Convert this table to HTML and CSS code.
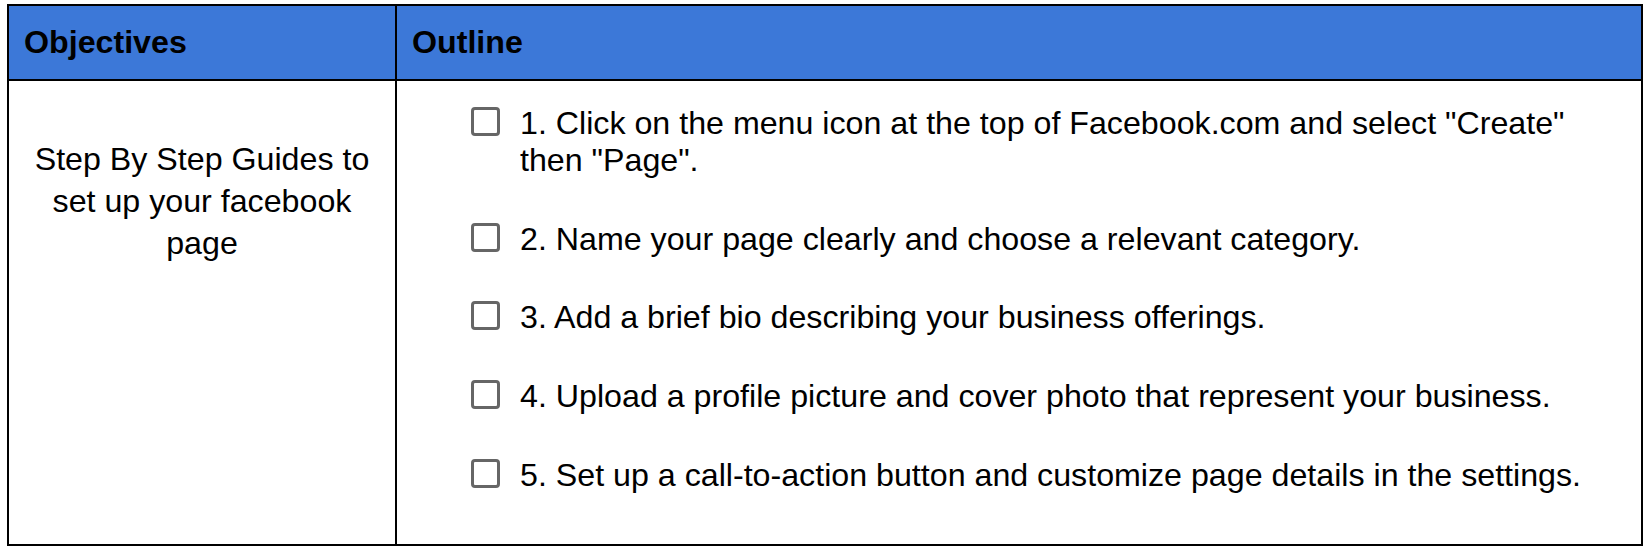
FILE: index.html
```html
<!DOCTYPE html>
<html lang="en">
<head>
  <meta charset="UTF-8">
  <title>Facebook Page Setup</title>
  <link rel="stylesheet" href="styles.css">
</head>
<body>
  <div class="table">
    <div class="head-cell left">Objectives</div>
    <div class="head-cell">Outline</div>

    <div class="body-cell left objective">
      Step By Step Guides to set up your facebook page
    </div>
    <div class="body-cell outline">
      <ul class="checklist">
        <li><span class="box"></span><span>1. Click on the menu icon at the top of Facebook.com and select "Create" then "Page".</span></li>
        <li><span class="box"></span><span>2. Name your page clearly and choose a relevant category.</span></li>
        <li><span class="box"></span><span>3. Add a brief bio describing your business offerings.</span></li>
        <li><span class="box"></span><span>4. Upload a profile picture and cover photo that represent your business.</span></li>
        <li><span class="box"></span><span>5. Set up a call-to-action button and customize page details in the settings.</span></li>
      </ul>
    </div>
  </div>
</body>
</html>
```

FILE: styles.css
```css
body { margin: 0; background: #fff; color: #000; font-family: "Liberation Sans", Arial, sans-serif; font-size: 32.2px; }
.table {
  display: grid;
  grid-template-columns: 388px 1fr;
  width: 1636px;
  box-sizing: border-box;
  margin: 4px 0 0 7px;
  border: 2px solid #000;
}
.head-cell {
  background: #3c78d8;
  font-weight: bold;
  height: 73px;
  line-height: 73px;
  padding-left: 15px;
  border-bottom: 2px solid #000;
}
.left { border-right: 2px solid #000; }
.objective {
  text-align: center;
  line-height: 42px;
  padding: 57px 16px 0;
}
.outline { padding: 24px 36px 8px 74px; }
.checklist { list-style: none; margin: 0; padding: 0; }
.checklist li {
  display: flex;
  align-items: flex-start;
  gap: 20px;
  line-height: 36.8px;
  margin-bottom: 42px;
}
.box {
  flex: none;
  width: 29px;
  height: 29px;
  box-sizing: border-box;
  border: 3px solid #666;
  border-radius: 4px;
  margin-top: 2px;
}
```
